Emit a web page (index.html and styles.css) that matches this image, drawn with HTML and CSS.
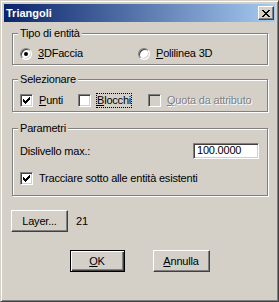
FILE: index.html
```html
<!DOCTYPE html>
<html lang="it">
<head>
  <meta charset="UTF-8">
  <meta name="viewport" content="width=device-width, initial-scale=1.0">
  <title>Triangoli</title>
  <link rel="stylesheet" href="styles.css">
</head>
<body>

  <div class="window">
    <div class="titlebar">
      <span class="title">Triangoli</span>
      <span class="close">
        <svg width="8" height="7" viewBox="0 0 8 7">
          <path d="M0 0h2v1H0z M6 0h2v1H6z M1 1h2v1H1z M5 1h2v1H5z M2 2h4v1H2z M3 3h2v1H3z M2 4h4v1H2z M1 5h2v1H1z M5 5h2v1H5z M0 6h2v1H0z M6 6h2v1H6z" fill="#000"/>
        </svg>
      </span>
    </div>

    <div class="client">
      <!-- Tipo di entità -->
      <fieldset class="group group-tipo">
        <legend>Tipo di entità</legend>
        <div class="row">
          <label class="option opt-wide"><span class="radio checked"></span><span><u>3</u>DFaccia</span></label>
          <label class="option"><span class="radio"></span><span><u>P</u>olilinea 3D</span></label>
        </div>
      </fieldset>

      <!-- Selezionare -->
      <fieldset class="group group-sel">
        <legend>Selezionare</legend>
        <div class="row">
          <label class="option opt-punti"><span class="check checked"></span><span><u>P</u>unti</span></label>
          <label class="option opt-blocchi"><span class="check"></span><span class="focus"><u>B</u>locchi</span></label>
          <label class="option disabled"><span class="check"></span><span><u>Q</u>uota da attributo</span></label>
        </div>
      </fieldset>

      <!-- Parametri -->
      <fieldset class="group group-par">
        <legend>Parametri</legend>
        <div class="param-row">
          <span>Dislivello max.:</span>
          <span class="field">100.0000</span>
        </div>
        <label class="option param-check"><span class="check checked"></span><span>Tracciare sotto alle entità esistenti</span></label>
      </fieldset>

      <div class="layer-row">
        <span class="btn btn-layer">Layer...</span>
        <span class="layer-count">21</span>
      </div>

      <div class="actions">
        <span class="btn btn-default"><u>O</u>K</span>
        <span class="btn"><u>A</u>nnulla</span>
      </div>
    </div>
  </div>

</body>
</html>
```

FILE: styles.css
```css
/* General Styles */
body {
  margin: 0;
  padding: 0;
  background-color: #d4d0c8;
  font-family: 'Liberation Sans', Arial, sans-serif;
  font-size: 11px;
  letter-spacing: -0.2px;
  color: #000;
}

u {
  text-decoration: underline;
  text-underline-offset: 1px;
}

/* Window frame */
.window {
  width: 279px;
  height: 302px;
  box-sizing: border-box;
  padding: 3px;
  background-color: #d4d0c8;
  border: 1px solid;
  border-color: #d4d0c8 #404040 #404040 #d4d0c8;
  box-shadow: inset 1px 1px #fff, inset -1px -1px #808080;
}

.titlebar {
  height: 18px;
  display: flex;
  align-items: center;
  justify-content: space-between;
  background: linear-gradient(to right, #0a246a, #a6caf0);
}

.title {
  padding-left: 2px;
  color: #fff;
  font-weight: bold;
  letter-spacing: 0;
}

.close {
  width: 16px;
  height: 14px;
  box-sizing: border-box;
  margin-right: 1px;
  display: flex;
  align-items: center;
  justify-content: center;
  background-color: #d4d0c8;
  border: 1px solid;
  border-color: #fff #404040 #404040 #fff;
  box-shadow: inset -1px -1px #808080;
}

.client {
  padding-top: 5px;
}

/* Group boxes */
.group {
  margin: 0 7px 0 8px;
  padding: 0;
  border: 1px solid #808080;
  box-shadow: inset 1px 1px #fff, 1px 1px #fff;
}

.group legend {
  margin-left: 5px;
  padding: 0 2px;
  line-height: 13px;
  background-color: #d4d0c8;
}

.group-sel {
  margin-top: 8px;
}

.group-par {
  margin-top: 10px;
}

.row {
  display: flex;
  align-items: center;
  height: 13px;
  padding: 7px 0 4px 7px;
}

.group-sel .row {
  padding: 8px 0 4px 7px;
}

.option {
  display: flex;
  align-items: center;
  gap: 6px;
  line-height: 13px;
}

.opt-wide {
  width: 118px;
}

.opt-punti {
  width: 58px;
}

.opt-blocchi {
  width: 70px;
}

.focus {
  outline: 1px dotted #000;
}

.disabled {
  color: #808080;
  text-shadow: 1px 1px #fff;
}

/* Radio buttons and check boxes */
.radio,
.check {
  position: relative;
  flex: none;
  box-sizing: border-box;
  background-color: #fff;
  border: 1px solid;
  border-color: #808080 #fff #fff #808080;
  box-shadow: inset 1px 1px #404040, inset -1px -1px #d4d0c8;
}

.radio {
  width: 12px;
  height: 12px;
  border-radius: 50%;
}

.radio.checked::after {
  content: "";
  position: absolute;
  left: 3px;
  top: 3px;
  width: 4px;
  height: 4px;
  border-radius: 50%;
  background-color: #000;
}

.check {
  width: 13px;
  height: 13px;
}

.check.checked::after {
  content: "";
  position: absolute;
  left: 2px;
  top: 2px;
  width: 7px;
  height: 7px;
  background:
    linear-gradient(#000, #000) 0 2px / 1px 3px no-repeat,
    linear-gradient(#000, #000) 1px 3px / 1px 3px no-repeat,
    linear-gradient(#000, #000) 2px 4px / 1px 3px no-repeat,
    linear-gradient(#000, #000) 3px 3px / 1px 3px no-repeat,
    linear-gradient(#000, #000) 4px 2px / 1px 3px no-repeat,
    linear-gradient(#000, #000) 5px 1px / 1px 3px no-repeat,
    linear-gradient(#000, #000) 6px 0 / 1px 3px no-repeat;
}

.disabled .check {
  background-color: #d4d0c8;
}

/* Parametri */
.param-row {
  display: flex;
  align-items: center;
  justify-content: space-between;
  padding: 8px 8px 0 7px;
}

.field {
  width: 66px;
  height: 16px;
  box-sizing: border-box;
  padding-left: 3px;
  line-height: 12px;
  background-color: #fff;
  border: 1px solid;
  border-color: #808080 #fff #fff #808080;
  box-shadow: inset 1px 1px #404040, inset -1px -1px #d4d0c8;
}

.param-check {
  margin: 13px 0 10px 7px;
}

/* Buttons */
.btn {
  display: flex;
  align-items: center;
  justify-content: center;
  width: 57px;
  height: 22px;
  box-sizing: border-box;
  background-color: #d4d0c8;
  border: 1px solid;
  border-color: #fff #404040 #404040 #fff;
  box-shadow: inset -1px -1px #808080;
}

.btn-default {
  width: 55px;
  border-color: #000;
  box-shadow: inset 1px 1px #fff, inset -1px -1px #404040, inset -2px -2px #808080;
}

.layer-row {
  display: flex;
  align-items: center;
  gap: 8px;
  margin-top: 14px;
  padding-left: 7px;
}

.actions {
  display: flex;
  justify-content: center;
  gap: 28px;
  margin-top: 18px;
}
```
